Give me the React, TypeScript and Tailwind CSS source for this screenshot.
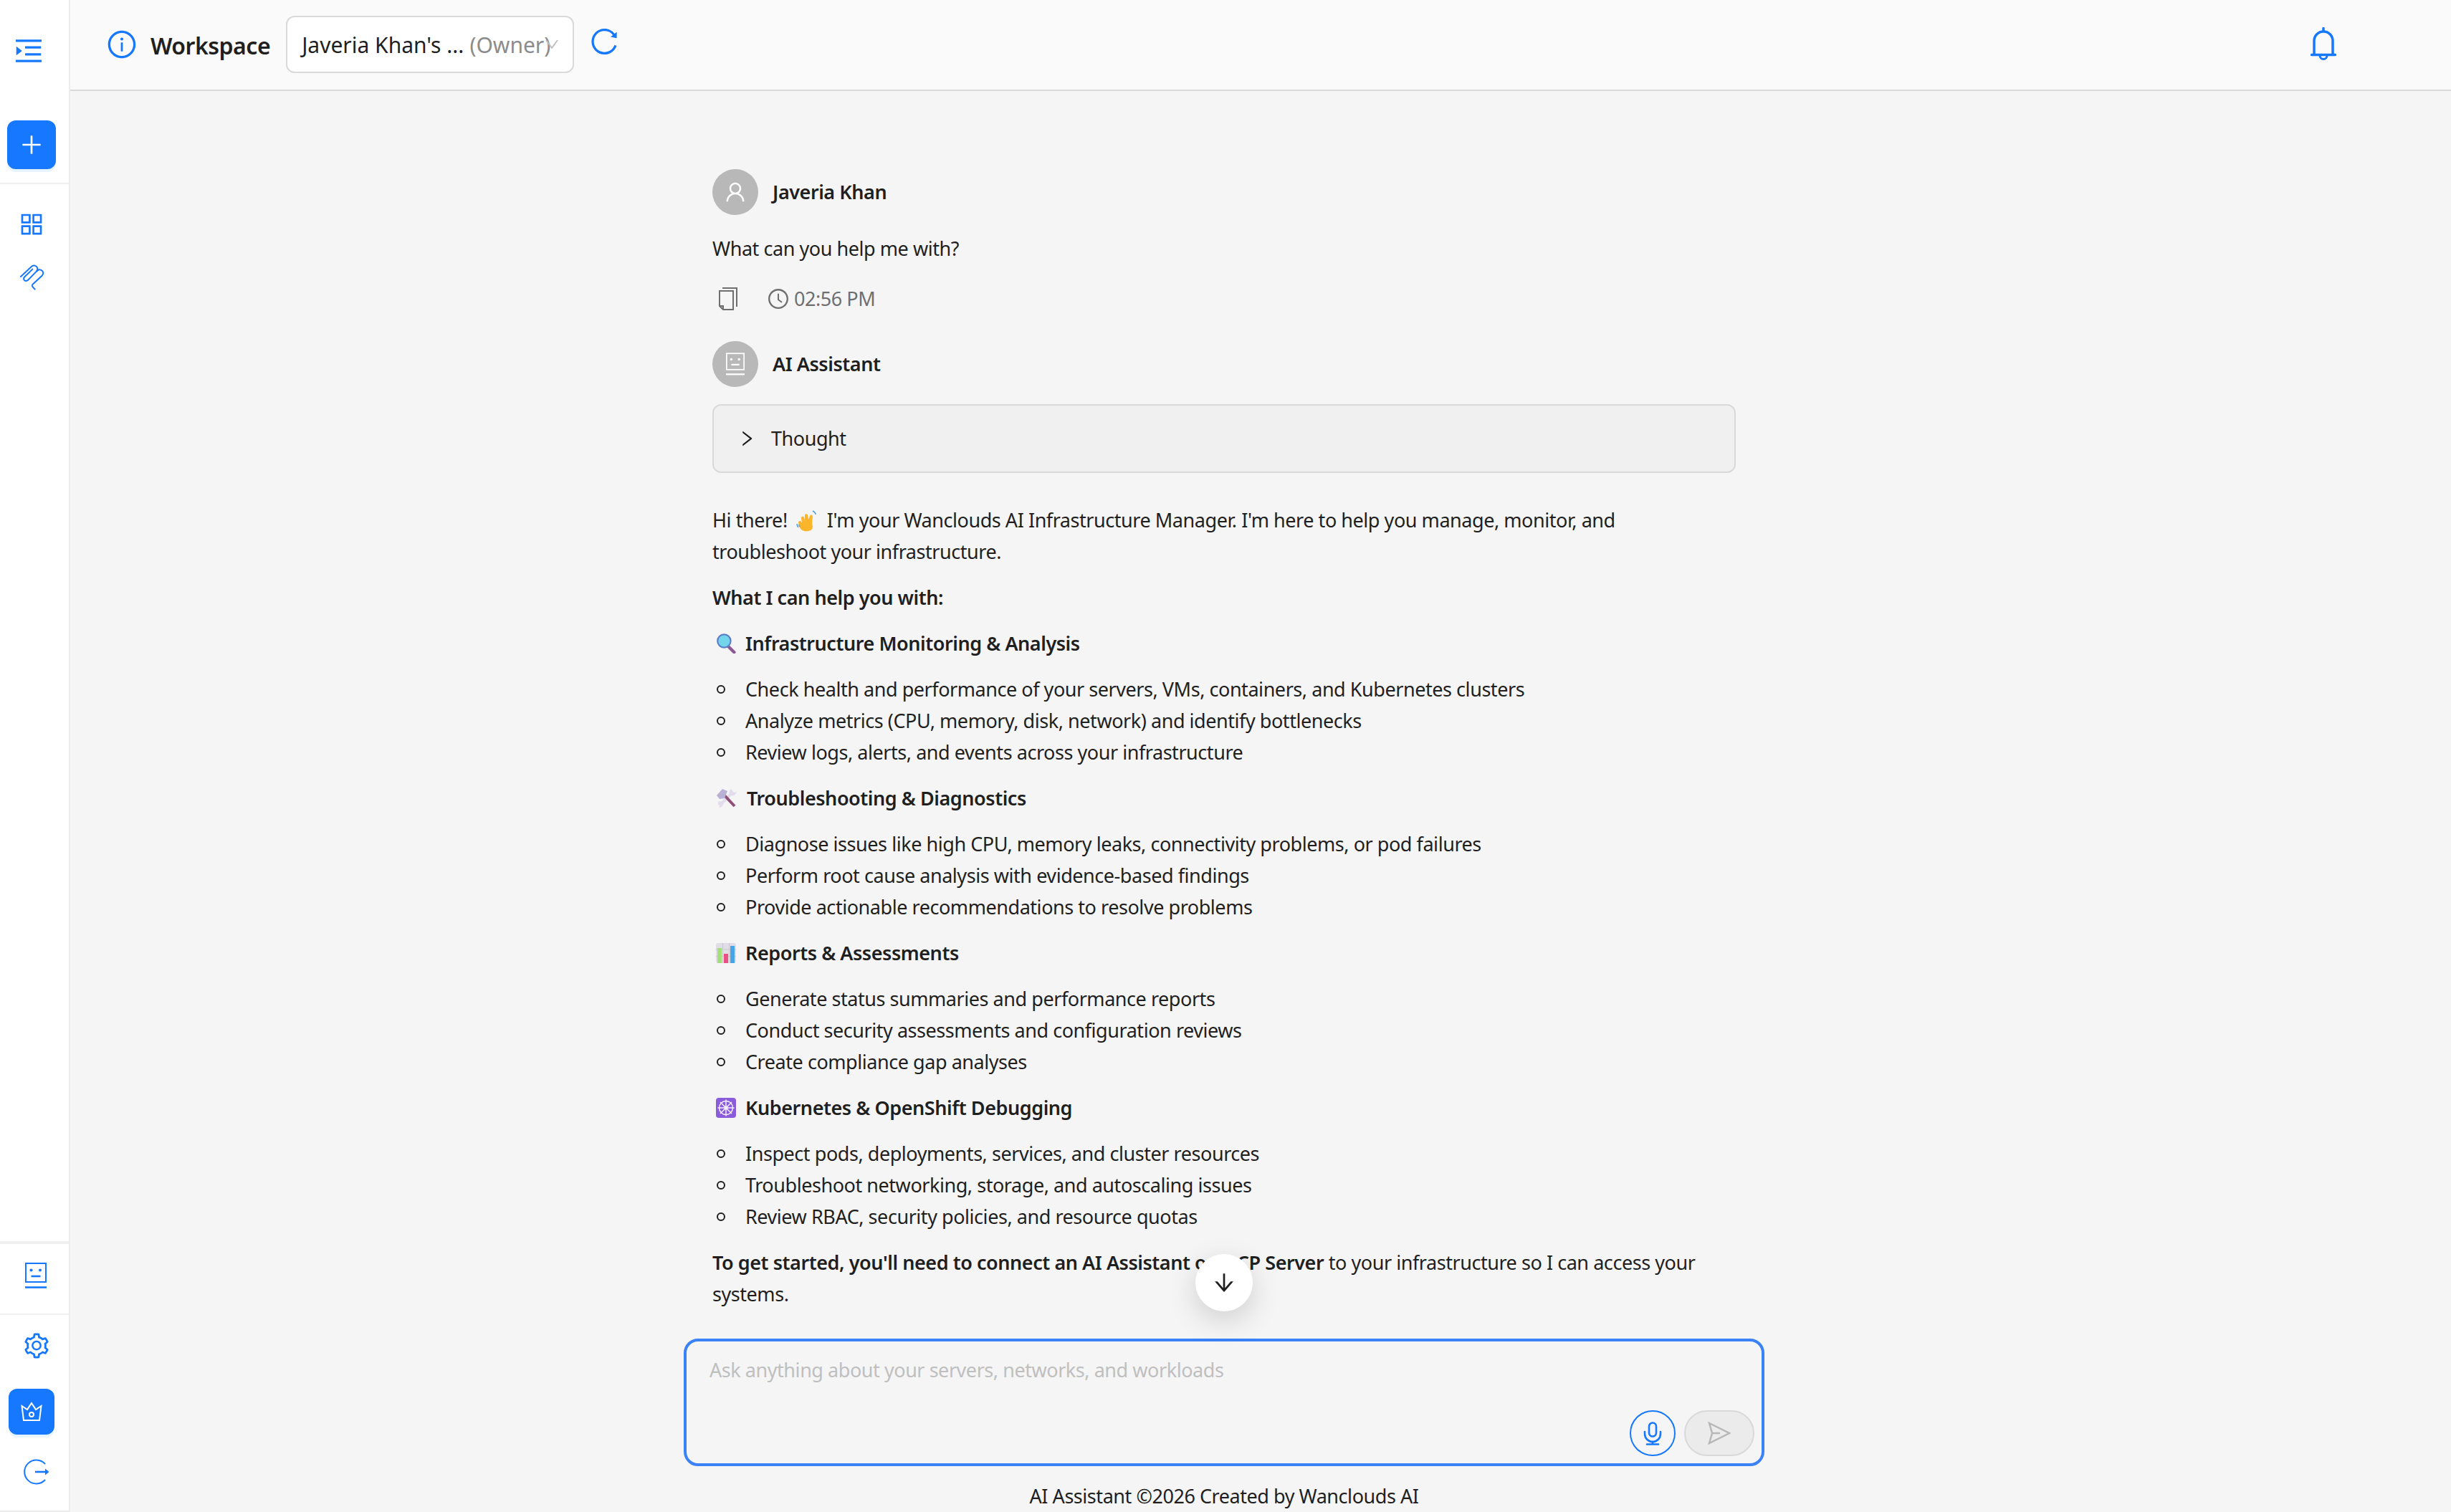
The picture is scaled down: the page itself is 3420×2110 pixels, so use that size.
import type { ReactNode } from 'react'
import {
  AiOutlineAppstore,
  AiOutlineArrowDown,
  AiOutlineClockCircle,
  AiOutlineDown,
  AiOutlineInfoCircle,
  AiOutlineMenuUnfold,
  AiOutlinePlus,
  AiOutlineReload,
  AiOutlineRight,
  AiOutlineSetting,
  AiOutlineUser,
} from 'react-icons/ai'

function RobotIcon({ className }: { className?: string }) {
  return (
    <svg viewBox="0 0 30 36" fill="none" stroke="currentColor" strokeWidth="2" className={className}>
      <rect x="1" y="1" width="28" height="26" />
      <path d="M0 34.500h30" strokeWidth="2.600" />
      <circle cx="8.500" cy="10.500" r="2" fill="currentColor" stroke="none" />
      <circle cx="21" cy="10.500" r="2" fill="currentColor" stroke="none" />
      <path d="M8.500 19h13" strokeWidth="2.600" />
    </svg>
  )
}

function ClipIcon({ className }: { className?: string }) {
  return (
    <svg viewBox="50 260 105 112" fill="none" stroke="currentColor" strokeWidth="6" strokeLinecap="round" className={className}>
      <path d="M55 315 103 270Q113 264 122 272 130 282 122 292L85 330Q76 336 70 329 65 321 72 315L105 283" />
      <path d="M122 292 132 285Q142 284 148 292 153 302 146 310L106 347Q102 352 106 358L115 368" />
    </svg>
  )
}

function CrownIcon({ className }: { className?: string }) {
  return (
    <svg viewBox="0 0 30 28" fill="none" stroke="currentColor" strokeWidth="2" className={className}>
      <path d="M1.500 6 9 11l6-9 6 9 7.500-5L26 26H4z" />
      <circle cx="15" cy="18" r="3" />
    </svg>
  )
}

function LogoutIcon({ className }: { className?: string }) {
  return (
    <svg viewBox="0 0 36 36" fill="none" stroke="currentColor" strokeWidth="2" className={className}>
      <path d="M30 7a16.500 16.500 0 1 0 0 22" />
      <path d="M16 18h15" strokeWidth="2.600" />
      <path d="M30 13.500 35.500 18 30 22.500z" fill="currentColor" stroke="none" />
    </svg>
  )
}

function CopyIcon({ className }: { className?: string }) {
  return (
    <svg viewBox="0 0 26 32" fill="none" stroke="currentColor" strokeWidth="2" className={className}>
      <path d="M5 1h20v26" />
      <path d="M1 5h19v26H6l-5-5z" />
      <path d="M1 26h5v5" />
    </svg>
  )
}

function BellIcon({ className }: { className?: string }) {
  return (
    <svg viewBox="0 0 36 47" fill="none" stroke="currentColor" strokeWidth="3.500" strokeLinecap="round" className={className}>
      <path d="M18 1.500v3" />
      <path d="M5 38V19a13 13 0 0 1 26 0v19" />
      <path d="M1.500 38.500h33" />
      <path d="M13 39.500a5 5 0 0 0 10 0" strokeWidth="3" />
    </svg>
  )
}

function MicIcon({ className }: { className?: string }) {
  return (
    <svg viewBox="0 0 26 33" fill="none" stroke="currentColor" strokeWidth="2.600" strokeLinecap="round" className={className}>
      <rect x="8" y="1.500" width="10" height="19" rx="5" />
      <path d="M2 14v3a11 11 0 0 0 22 0v-3" />
      <path d="M13 28v3.500M5 31.500h16" />
    </svg>
  )
}

function SendIcon({ className }: { className?: string }) {
  return (
    <svg viewBox="0 0 32 32" fill="none" stroke="currentColor" strokeWidth="2.500" className={className}>
      <path d="M2 2 30 16 2 30 6 16z" />
      <path d="M6 16h11" />
    </svg>
  )
}

function WaveEmoji() {
  return (
    <svg viewBox="0 0 30 30" className="h-[30px] w-[30px]">
      <path d="M11 29c-4-1-6-4-7-7l-1-5c0-2 3-3 4-1l1 2-1-7c0-2.500 3-3 4-1l1 4 0-7c0-2.500 3.500-2.500 4 0l1 6 2-5c1-2.500 4-1.500 4 1l-1 9 1 5c0 5-5 7-12 6z" fill="#fbb52b" />
      <path d="M23 1c2 1 4 3 4 5M1 19c0 2 1 4 2 5M4 20c0 1 .5 2 1 3" stroke="#4a9fe0" strokeWidth="1.500" fill="none" />
    </svg>
  )
}

function SearchEmoji() {
  return (
    <svg viewBox="0 0 30 32" className="h-[28px] w-[28px]">
      <path d="m18 20 10 10" stroke="#8e5a96" strokeWidth="5" strokeLinecap="round" />
      <circle cx="12" cy="12" r="10.500" fill="#72d5ec" stroke="#5b7fc9" strokeWidth="2.500" />
    </svg>
  )
}

function ToolsEmoji() {
  return (
    <svg viewBox="8 10 30 28" className="h-[28px] w-[30px]">
      <path d="M32 15 14 33" stroke="#e2dcec" strokeWidth="4" />
      <path d="M30 11c-3 1-4 4-3 7l3 2c3 1 6-1 7-5l-4 1-2-2z" fill="#e2dcec" />
      <path d="M11 29c3-2 5-1 6 1l1 3c-1 3-4 4-6 4l1-3-2-1z" fill="#e2dcec" />
      <path d="m20 20 14 15" stroke="#8f4f78" strokeWidth="4" />
      <path d="m9 20 8-9 7 3-4 10-7 1z" fill="#b9b0d6" />
    </svg>
  )
}

function ChartEmoji() {
  return (
    <svg viewBox="0 0 28 28" className="h-[28px] w-[28px]">
      <rect width="28" height="28" rx="3" fill="#e0dde6" />
      <path d="M9.500 0v28M18.500 0v28M0 9h28M0 18.500h28" stroke="#cbc7d2" strokeWidth="1" />
      <rect x="2" y="7" width="6" height="21" fill="#a3e07c" />
      <rect x="11" y="15" width="6" height="13" fill="#ec4f82" />
      <rect x="20" y="4" width="6" height="24" fill="#45a5e8" />
    </svg>
  )
}

function WheelEmoji() {
  return (
    <svg viewBox="0 0 28 28" className="h-[28px] w-[28px]">
      <rect width="28" height="28" rx="4" fill="#8a5cdc" />
      <g fill="none" stroke="#f3ecff" strokeWidth="1.500">
        <circle cx="14" cy="14" r="9.500" />
        <circle cx="14" cy="14" r="2" />
        <path d="M14 2.500v23M2.500 14h23M6 6l16 16M22 6 6 22" />
      </g>
    </svg>
  )
}

type Section = { emoji: ReactNode; title: string; items: string[] }

const sections: Section[] = [
  {
    emoji: <SearchEmoji />,
    title: 'Infrastructure Monitoring & Analysis',
    items: [
      'Check health and performance of your servers, VMs, containers, and Kubernetes clusters',
      'Analyze metrics (CPU, memory, disk, network) and identify bottlenecks',
      'Review logs, alerts, and events across your infrastructure',
    ],
  },
  {
    emoji: <ToolsEmoji />,
    title: 'Troubleshooting & Diagnostics',
    items: [
      'Diagnose issues like high CPU, memory leaks, connectivity problems, or pod failures',
      'Perform root cause analysis with evidence-based findings',
      'Provide actionable recommendations to resolve problems',
    ],
  },
  {
    emoji: <ChartEmoji />,
    title: 'Reports & Assessments',
    items: [
      'Generate status summaries and performance reports',
      'Conduct security assessments and configuration reviews',
      'Create compliance gap analyses',
    ],
  },
  {
    emoji: <WheelEmoji />,
    title: 'Kubernetes & OpenShift Debugging',
    items: [
      'Inspect pods, deployments, services, and cluster resources',
      'Troubleshoot networking, storage, and autoscaling issues',
      'Review RBAC, security policies, and resource quotas',
    ],
  },
]

function Sidebar() {
  return (
    <aside className="flex h-full w-[98px] shrink-0 flex-col border-b-2 border-r-2 border-[#ececec] bg-white text-[#1677ff]">
      <div className="flex h-[127px] shrink-0 items-center pl-[17px]">
        <AiOutlineMenuUnfold className="mt-[14px] size-[46px]" />
      </div>
      <div className="flex h-[130px] shrink-0 items-start justify-start border-b-2 border-[#f0f0f0] pl-[10px] pt-[41px]">
        <button className="flex h-[68px] w-[68px] items-center justify-center rounded-[12px] bg-[#1677ff] text-white shadow-[0_4px_0_#e6f4ff]">
          <AiOutlinePlus className="size-[36px]" />
        </button>
      </div>
      <div className="flex flex-col pl-[24px] pt-[36px]">
        <AiOutlineAppstore className="size-[40px]" />
        <ClipIcon className="ml-[3px] mt-[35px] h-[37px] w-[35px]" />
      </div>
      <div className="mt-auto flex flex-col">
        <div className="flex h-[103px] items-start border-b-2 border-t-4 border-[#f0f0f0] pl-[35px] pt-[26px]">
          <RobotIcon className="h-[36px] w-[30px]" />
        </div>
        <div className="flex flex-col pb-[36px] pl-[12px] pt-[23px]">
          <AiOutlineSetting className="ml-[19px] size-[40px]" />
          <button className="mt-[40px] flex h-[64px] w-[64px] items-center justify-center rounded-[12px] bg-[#1677ff] text-white shadow-[0_4px_0_#e6f4ff]">
            <CrownIcon className="h-[28px] w-[30px]" />
          </button>
          <LogoutIcon className="ml-[21px] mt-[34px] size-[36px]" />
        </div>
      </div>
    </aside>
  )
}

function Header() {
  return (
    <header className="flex h-[127px] shrink-0 items-start border-b-2 border-[#d9d9d9] bg-[#fafafa] pl-[50px] pr-[160px] text-[#1677ff]">
      <AiOutlineInfoCircle className="mt-[40px] size-[44px]" />
      <span className="ml-[18px] mt-[39px] text-[32px] font-semibold leading-[50px] tracking-[-0.5px] text-[#1f1f1f]">Workspace</span>
      <div className="ml-[22px] mt-[22px] flex h-[80px] w-[402px] items-center rounded-[12px] border-2 border-[#d9d9d9] bg-white pl-[20px] text-[30px] text-[#1f1f1f]">
        <span className="whitespace-nowrap">Javeria Khan's ...</span>
        <span className="ml-[8px] whitespace-nowrap text-[#8c8c8c]">(Owner)</span>
        <AiOutlineDown className="ml-[-10px] size-[24px] text-[#bfbfbf]" />
      </div>
      <AiOutlineReload className="ml-[20px] mt-[36px] size-[44px]" />
      <BellIcon className="ml-auto mt-[38px] h-[47px] w-[36px]" />
    </header>
  )
}

function Avatar({ children }: { children: ReactNode }) {
  return (
    <div className="flex size-[64px] shrink-0 items-center justify-center rounded-full bg-[#b8b8b8] text-white">
      {children}
    </div>
  )
}

function Conversation() {
  return (
    <div className="relative h-[1741px] shrink-0 px-[40px] pt-[109px] text-[27px] leading-[44px] tracking-[-0.45px] text-[#1f1f1f]">
      <div className="flex items-center gap-[20px]">
        <Avatar>
          <AiOutlineUser className="size-[34px]" />
        </Avatar>
        <span className="font-semibold">Javeria Khan</span>
      </div>
      <p className="mt-[25px]">What can you help me with?</p>
      <div className="mt-[32px] flex h-[32px] items-center pl-[9px] text-[#6f6f6f]">
        <CopyIcon className="h-[32px] w-[26px]" />
        <AiOutlineClockCircle className="ml-[41px] size-[32px]" />
        <span className="ml-[6px]">02:56 PM</span>
      </div>
      <div className="mt-[43px] flex items-center gap-[20px]">
        <Avatar>
          <RobotIcon className="h-[32px] w-[26px]" />
        </Avatar>
        <span className="font-semibold">AI Assistant</span>
      </div>
      <div className="mt-[24px] flex h-[96px] items-center rounded-[12px] border-2 border-[#d9d9d9] bg-[#f0f0f0] pl-[32px]">
        <AiOutlineRight className="size-[28px]" />
        <span className="ml-[20px]">Thought</span>
      </div>
      <p className="mt-[44px]">
        Hi there! <span className="mx-[6px] inline-block align-[-6px]"><WaveEmoji /></span> I'm your Wanclouds AI Infrastructure Manager. I'm here to help you manage, monitor, and
        <br />
        troubleshoot your infrastructure.
      </p>
      <p className="mt-[20px] font-semibold">What I can help you with:</p>
      {sections.map((section) => (
        <div key={section.title}>
          <h3 className="mt-[20px] flex items-center gap-[13px] pl-[5px] font-semibold">
            {section.emoji}
            {section.title}
          </h3>
          <ul className="mt-[20px]">
            {section.items.map((item) => (
              <li key={item} className="flex items-center">
                <span className="ml-[6px] size-[12px] rounded-full border-2 border-[#1f1f1f]" />
                <span className="ml-[28px]">{item}</span>
              </li>
            ))}
          </ul>
        </div>
      ))}
      <p className="mt-[20px]">
        <strong className="font-semibold">To get started, you'll need to connect an AI Assistant or MCP Server</strong> to your infrastructure so I can access your systems.
      </p>
      <button className="absolute left-[714px] top-[1623px] flex size-[80px] items-center justify-center rounded-full bg-white shadow-[0_12px_40px_rgba(0,0,0,0.16)]">
        <AiOutlineArrowDown className="size-[36px]" />
      </button>
    </div>
  )
}

function Composer() {
  return (
    <div className="flex h-[178px] shrink-0 flex-col rounded-[20px] border-4 border-[#3b82f6] bg-[#f5f5f5] px-[32px] pt-[18px] text-[27px] leading-[44px] tracking-[-0.45px] text-[#bfbfbf]">
      <span>Ask anything about your servers, networks, and workloads</span>
      <div className="-mr-[22px] mb-[10px] mt-auto flex justify-end gap-[12px]">
        <button className="flex size-[64px] items-center justify-center rounded-full border-2 border-[#1677ff] text-[#1677ff]">
          <MicIcon className="h-[33px] w-[26px]" />
        </button>
        <button className="flex h-[64px] w-[98px] items-center justify-center rounded-full border-2 border-[#d9d9d9] bg-[#ebebeb] text-[#b8b8b8]">
          <SendIcon className="size-[32px]" />
        </button>
      </div>
    </div>
  )
}

export default function App() {
  return (
    <div className="flex h-screen w-full overflow-hidden bg-[#f5f5f5] font-['Noto_Sans',sans-serif]">
      <Sidebar />
      <main className="flex min-w-0 flex-1 flex-col">
        <Header />
        <div className="ml-[856px] flex w-[1508px] flex-1 flex-col">
          <Conversation />
          <Composer />
          <p className="mt-[20px] text-center text-[27px] leading-[44px] tracking-[-0.45px] text-[#1f1f1f]">AI Assistant ©2026 Created by Wanclouds AI</p>
        </div>
      </main>
    </div>
  )
}
